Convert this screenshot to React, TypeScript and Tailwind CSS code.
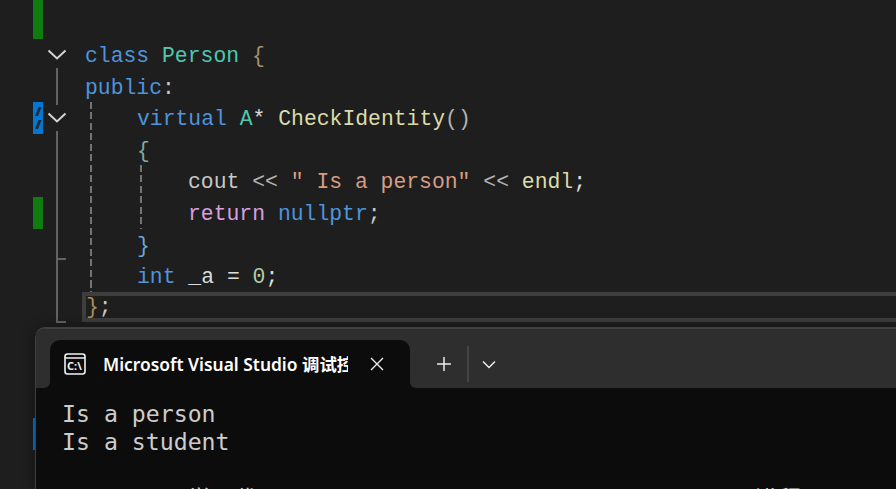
const ROW = 'h-[31.6px]';

// change margin + fold column per editor row
const gutterRows: { mark?: 'green' | 'blue'; fold?: 'chevron' | 'chevronEnd' | 'line' | 'tick' | 'none' }[] = [
  { mark: 'green', fold: 'chevron' },
  { fold: 'line' },
  { mark: 'blue', fold: 'chevronEnd' },
  { fold: 'line' },
  { fold: 'line' },
  { mark: 'green', fold: 'line' },
  { fold: 'tick' },
  { fold: 'line' },
  { fold: 'tick' },
  {},
  {},
  {},
  { mark: 'blue' },
];

function Chevron() {
  return (
    <svg width="20" height="11" viewBox="0 0 20 11" fill="none" className="absolute left-[4px] top-[10px]">
      <polyline points="1.5,1.5 10,9.5 18.5,1.5" stroke="#d4d4d4" strokeWidth="2" />
    </svg>
  );
}

function FoldCell({ fold }: { fold?: string }) {
  if (fold === 'chevron') {
    return (
      <div className={`relative ${ROW} flex flex-col justify-end pl-[13px]`}>
        <Chevron />
        <div className="w-[2px] h-[3px] bg-[#636363]" />
      </div>
    );
  }
  if (fold === 'chevronEnd') {
    return (
      <div className={`relative ${ROW} flex flex-col justify-between pl-[13px]`}>
        <div className="w-[2px] h-[3px] bg-[#636363]" />
        <Chevron />
        <div className="w-[2px] h-[3px] bg-[#636363]" />
      </div>
    );
  }
  if (fold === 'line') {
    return (
      <div className={`${ROW} pl-[13px]`}>
        <div className="w-[2px] h-full bg-[#636363]" />
      </div>
    );
  }
  if (fold === 'tick') {
    return (
      <div className={`${ROW} pl-[13px]`}>
        <div className="w-[10px] h-full border-l-2 border-b-2 border-[#636363]" />
      </div>
    );
  }
  return <div className={ROW} />;
}

function MarkCell({ mark }: { mark?: string }) {
  if (mark === 'green') return <div className={`${ROW} w-[10px] bg-[#107c10]`} />;
  if (mark === 'blue') {
    return (
      <div className={`${ROW} w-[10px] overflow-hidden bg-[#0078d4]`}>
        <svg width="10" height="32" viewBox="0 0 10 32">
          <path d="M5.5 5 L8.5 5 L5 14 L2 14 Z M5.5 18 L8.5 18 L5 27 L2 27 Z" fill="#1e2a36" />
        </svg>
      </div>
    );
  }
  return <div className={ROW} />;
}

function DashGuide() {
  return (
    <div className="w-[2px] shrink-0 bg-[repeating-linear-gradient(to_bottom,#747474_0,#747474_7px,transparent_7px,transparent_10.5px)]" />
  );
}

function CodeLine({ children }: { children: React.ReactNode }) {
  return <div className={`${ROW} leading-[34.6px] whitespace-pre`}>{children}</div>;
}

function Kw({ children }: { children: React.ReactNode }) {
  return <span className="text-[#4f94dc]">{children}</span>;
}

function TerminalIcon() {
  return (
    <svg width="23" height="23" viewBox="0 0 23 23" fill="none">
      <rect x="1" y="1" width="20" height="20" rx="2.5" stroke="#f2f2f2" strokeWidth="1.6" />
      <line x1="1" y1="5" x2="21" y2="5" stroke="#f2f2f2" strokeWidth="1.4" />
      <text x="3" y="16.5" fontSize="11" fontWeight="700" fill="#f2f2f2" fontFamily="'Noto Sans', sans-serif">C:\</text>
    </svg>
  );
}

export default function App() {
  return (
    <div className="relative w-[896px] h-[489px] overflow-hidden bg-[#1e1e1e]">
      {/* Editor */}
      <div className="flex pl-[33px]">
        <div className="w-[10px] shrink-0">
          <div className="h-[7.4px] bg-[#107c10]" />
          {gutterRows.map((r, i) => (
            <div key={i}>
              {i === 0 && <div className={`${ROW} w-[10px] bg-[#107c10]`} />}
              {i === 0 ? <div className={ROW} /> : <MarkCell mark={r.mark} />}
            </div>
          ))}
        </div>
        <div className="w-[42px] shrink-0 pt-[39px]">
          {gutterRows.map((r, i) => (
            <FoldCell key={i} fold={r.fold} />
          ))}
        </div>
        <div className="flex-1 pt-[39px] text-[21.4px] text-[#dcdcdc] font-['Liberation_Mono',monospace]">
          <CodeLine>
            <Kw>class</Kw> <span className="text-[#4ec9b0]">Person</span> <span className="text-[#a98f68]">{'{'}</span>
          </CodeLine>
          <CodeLine>
            <Kw>public</Kw>
            <span className="text-[#c8c8c8]">:</span>
          </CodeLine>
          <div className="flex ml-[5px]">
            <DashGuide />
            <div className="pl-[45px]">
              <CodeLine>
                <Kw>virtual</Kw> <span className="text-[#4ec9b0]">A</span>* <span className="text-[#dcdcaa]">CheckIdentity</span>
                <span className="text-[#b4b4b4]">()</span>
              </CodeLine>
              <CodeLine>
                <span className="text-[#86ab9a]">{'{'}</span>
              </CodeLine>
              <div className="flex ml-[3px]">
                <DashGuide />
                <div className="pl-[46px]">
                  <CodeLine>
                    <span className="text-[#c8c8c8]">cout</span> <span className="text-[#b4b4b4]">&lt;&lt;</span>{' '}
                    <span className="text-[#d69d85]">" Is a person"</span> <span className="text-[#b4b4b4]">&lt;&lt;</span>{' '}
                    <span className="text-[#dcdcaa]">endl</span>;
                  </CodeLine>
                  <CodeLine>
                    <span className="text-[#d8a0df]">return</span> <Kw>nullptr</Kw>
                    <span className="text-[#c8c8c8]">;</span>
                  </CodeLine>
                </div>
              </div>
              <CodeLine>
                <span className="text-[#6fa8d0]">{'}'}</span>
              </CodeLine>
              <CodeLine>
                <Kw>int</Kw> <span className="text-[#dcdcdc]">_a</span> = <span className="text-[#b5cea8]">0</span>;
              </CodeLine>
            </div>
          </div>
          <div className="h-[30px] -ml-[3px] border-[4px] border-r-0 border-[#3e3e3e] leading-[22px] whitespace-pre">
            <span className="text-[#b08d57]">{'}'}</span>
            <span className="text-[#c8c8c8]">;</span>
          </div>
        </div>
      </div>

      {/* Terminal window */}
      <div className="absolute left-[35px] top-[327px] right-0 bottom-0 overflow-hidden rounded-tl-[10px] border-l border-t-2 border-[#404040] bg-[#0c0c0c] shadow-[0_0_14px_rgba(0,0,0,0.4)]">
        <div className="flex h-[59px]">
          <div className="w-[14px] shrink-0 rounded-br-[6px] bg-[#2e2e2e]" />
          <div className="w-[360px] shrink-0 bg-[#2e2e2e] pt-[11px]">
            <div className="flex h-full items-center rounded-t-[10px] bg-[#0c0c0c] pl-[14px]">
              <TerminalIcon />
              <span className="ml-[16px] w-[245px] overflow-hidden whitespace-nowrap text-[17.4px] font-semibold text-white font-['Noto_Sans','Noto_Sans_CJK_SC',sans-serif]">
                Microsoft Visual Studio 调试控制台
              </span>
              <svg width="14" height="14" viewBox="0 0 14 14" className="ml-[22px]" fill="none">
                <path d="M1 1 L13 13 M13 1 L1 13" stroke="#ededed" strokeWidth="1.4" />
              </svg>
            </div>
          </div>
          <div className="flex flex-1 items-center rounded-bl-[6px] bg-[#2e2e2e] pt-[11px]">
            <svg width="16" height="16" viewBox="0 0 16 16" className="ml-[26px]" fill="none">
              <path d="M8 1 V15 M1 8 H15" stroke="#ededed" strokeWidth="1.5" />
            </svg>
            <div className="ml-[15px] h-[36px] w-[2px] bg-[#444444]" />
            <svg width="14" height="9" viewBox="0 0 14 9" className="ml-[13px]" fill="none">
              <polyline points="1,1.5 7,7.5 13,1.5" stroke="#ededed" strokeWidth="1.5" />
            </svg>
          </div>
        </div>
        <div className="pl-[26px] pt-[12px] text-[23.2px] leading-[28px] text-[#cccccc] whitespace-pre font-['DejaVu_Sans_Mono','Noto_Sans_CJK_SC',monospace]">
          <div>Is a person</div>
          <div>Is a student</div>
          <div>&nbsp;</div>
          <div className="mt-[1px]">D:\code1\学习代码\Project1\x64\Debug\Project1.exe (进程 21340)已退出。</div>
        </div>
      </div>
    </div>
  );
}
